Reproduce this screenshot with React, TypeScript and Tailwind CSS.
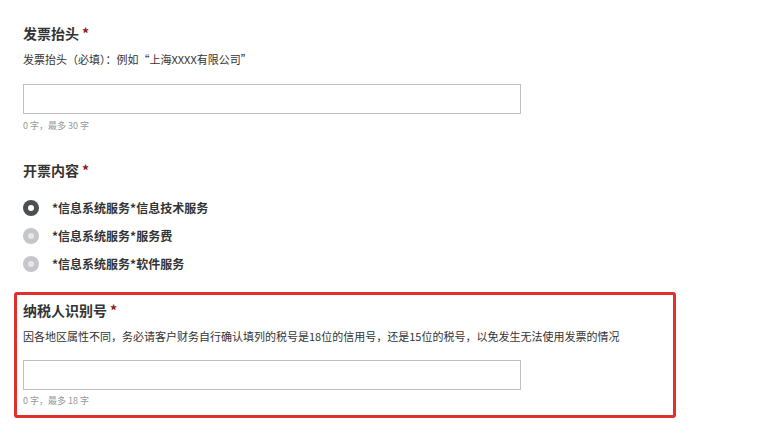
const font = { fontFamily: '"Noto Sans CJK SC", "Noto Sans", sans-serif' }

const Star = () => <span className="ml-[3px] text-[#8b1a1a]">*</span>

const Radio = ({ checked, label }: { checked?: boolean; label: string }) => (
  <div className="flex h-[28px] items-center">
    <span
      className={
        checked
          ? 'flex h-[16px] w-[16px] items-center justify-center rounded-full bg-[#4b4e55]'
          : 'flex h-[16px] w-[16px] items-center justify-center rounded-full bg-[#c4c6ca]'
      }
    >
      <span className={checked ? 'h-[6px] w-[6px] rounded-full bg-white' : 'h-[6px] w-[6px] rounded-full bg-[#e6e7e9]'} />
    </span>
    <span className="ml-[13px] text-[12px] font-bold text-[#333]">{label}</span>
  </div>
)

export default function App() {
  return (
    <div className="min-h-[436px] w-[768px] bg-white pl-[23px]" style={font}>
      <div className="pt-[23px]">
        <div className="h-[20px] text-[14px] font-bold leading-[20px] text-[#333]">
          发票抬头<Star />
        </div>
        <div className="mt-[8px] h-[16px] text-[11px] leading-[16px] text-[#333]">
          发票抬头（必填）：例如“上海XXXX有限公司”
        </div>
        <div className="mt-[17px] h-[30px] w-[498px] border border-[#c0c0c0] bg-white" />
        <div className="mt-[6px] h-[12px] text-[9px] leading-[12px] text-[#999]">0 字，最多 30 字</div>
      </div>

      <div className="mt-[28px]">
        <div className="h-[20px] text-[14px] font-bold leading-[20px] text-[#333]">
          开票内容<Star />
        </div>
        <div className="mt-[14px] flex flex-col">
          <Radio checked label="*信息系统服务*信息技术服务" />
          <Radio label="*信息系统服务*服务费" />
          <Radio label="*信息系统服务*软件服务" />
        </div>
      </div>

      <div className="ml-[-9px] mt-[14px] w-[662px] rounded-[3px] border-[3px] border-[#e0302e] px-[6px] pb-[8px] pt-[5px]">
        <div className="h-[20px] text-[14px] font-bold leading-[20px] text-[#333]">
          纳税人识别号<Star />
        </div>
        <div className="mt-[8px] h-[16px] text-[11px] leading-[16px] text-[#333]">
          因各地区属性不同，务必请客户财务自行确认填列的税号是18位的信用号，还是15位的税号，以免发生无法使用发票的情况
        </div>
        <div className="mt-[16px] h-[30px] w-[498px] border border-[#c0c0c0] bg-white" />
        <div className="mt-[5px] h-[12px] text-[9px] leading-[12px] text-[#999]">0 字，最多 18 字</div>
      </div>
    </div>
  )
}
